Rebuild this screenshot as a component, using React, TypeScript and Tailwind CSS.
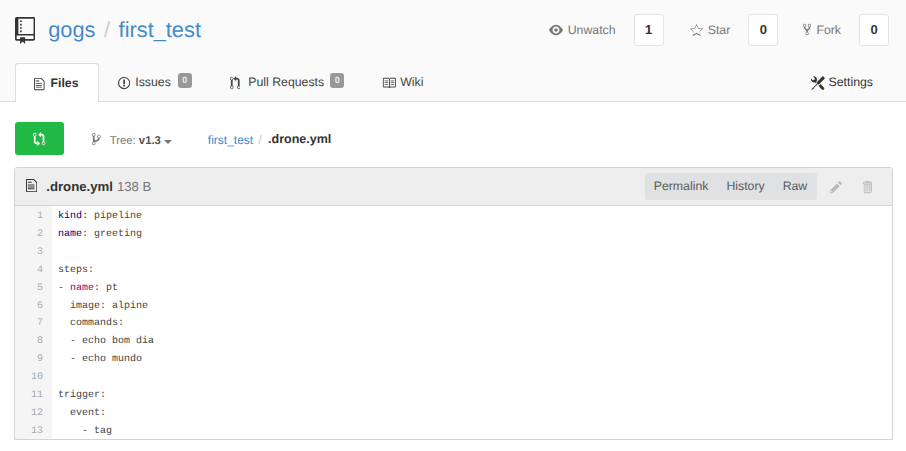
const ICONS: Record<string, { w: number; d: string }> = {
  repo: { w: 12, d: 'M4 9H3V8h1v1zm0-3H3v1h1V6zm0-2H3v1h1V4zm0-2H3v1h1V2zm8-1v12c0 .55-.45 1-1 1H6v2l-1.5-1.5L3 16v-2H1c-.55 0-1-.45-1-1V1c0-.55.45-1 1-1h10c.55 0 1 .45 1 1zm-1 10H1v2h2v-1h3v1h5v-2zm0-10H2v9h9V1z' },
  eye: { w: 16, d: 'M8.06 2C3 2 0 8 0 8s3 6 8.06 6C13 14 16 8 16 8s-3-6-7.94-6zM8 12c-2.2 0-4-1.78-4-4 0-2.2 1.8-4 4-4 2.22 0 4 1.8 4 4 0 2.22-1.78 4-4 4zm2-4c0 1.11-.89 2-2 2-1.11 0-2-.89-2-2 0-1.11.89-2 2-2 1.11 0 2 .89 2 2z' },
  star: { w: 14, d: 'M14 6l-4.9-.64L7 1 4.9 5.36 0 6l3.6 3.26L2.67 14 7 11.67 11.33 14l-.93-4.74L14 6zm-3.86 2.9l.7 3.55L7 10.4l-3.84 2.05.7-3.55L1.2 6.5l3.64-.48L7 2.8l2.16 3.22 3.64.48-2.66 2.4z' },
  fork: { w: 10, d: 'M8 1a1.993 1.993 0 0 0-1 3.72V6L5 8 3 6V4.72A1.993 1.993 0 0 0 2 1a1.993 1.993 0 0 0-1 3.72V6.5l3 3v1.78A1.993 1.993 0 0 0 5 15a1.993 1.993 0 0 0 1-3.72V9.5l3-3V4.72A1.993 1.993 0 0 0 8 1zM2 4.2C1.34 4.2.8 3.65.8 3c0-.65.55-1.2 1.2-1.2.65 0 1.2.55 1.2 1.2 0 .65-.55 1.2-1.2 1.2zm3 10c-.66 0-1.2-.55-1.2-1.2 0-.65.55-1.2 1.2-1.2.65 0 1.2.55 1.2 1.2 0 .65-.55 1.2-1.2 1.2zm3-10c-.66 0-1.2-.55-1.2-1.2 0-.65.55-1.2 1.2-1.2.65 0 1.2.55 1.2 1.2 0 .65-.55 1.2-1.2 1.2z' },
  file: { w: 12, d: 'M6 5H2V4h4v1zM2 8h7V7H2v1zm0 2h7V9H2v1zm0 2h7v-1H2v1zm10-7.5V14c0 .55-.45 1-1 1H1c-.55 0-1-.45-1-1V2c0-.55.45-1 1-1h7.5L12 4.5zM11 5L8 2H1v12h10V5z' },
  issue: { w: 14, d: 'M7 2.3c3.14 0 5.7 2.56 5.7 5.7s-2.56 5.7-5.7 5.7A5.71 5.71 0 0 1 1.3 8c0-3.14 2.56-5.7 5.7-5.7zM7 1C3.14 1 0 4.14 0 8s3.14 7 7 7 7-3.14 7-7-3.14-7-7-7zm1 3H6v5h2V4zm0 6H6v2h2v-2z' },
  pull: { w: 12, d: 'M11 11.28V5c-.03-.78-.34-1.47-.94-2.06C9.46 2.35 8.78 2.03 8 2H7V0L4 3l3 3V4h1c.27.02.48.11.69.31.21.2.3.42.31.69v6.28A1.993 1.993 0 0 0 10 15a1.993 1.993 0 0 0 1-3.72zm-1 2.92c-.66 0-1.2-.55-1.2-1.2 0-.65.55-1.2 1.2-1.2.65 0 1.2.55 1.2 1.2 0 .65-.55 1.2-1.2 1.2zM4 3c0-1.11-.89-2-2-2a1.993 1.993 0 0 0-1 3.72v6.56A1.993 1.993 0 0 0 2 15a1.993 1.993 0 0 0 1-3.72V4.72c.59-.34 1-.98 1-1.72zm-.8 10c0 .66-.55 1.2-1.2 1.2-.65 0-1.2-.55-1.2-1.2 0-.65.55-1.2 1.2-1.2.65 0 1.2.55 1.2 1.2zM2 4.2C1.34 4.2.8 3.65.8 3c0-.65.55-1.2 1.2-1.2.65 0 1.2.55 1.2 1.2 0 .65-.55 1.2-1.2 1.2z' },
  book: { w: 16, d: 'M3 5h4v1H3V5zm0 3h4V7H3v1zm0 2h4V9H3v1zm11-5h-4v1h4V5zm0 2h-4v1h4V7zm0 2h-4v1h4V9zm2-6v9c0 .55-.45 1-1 1H9.5l-1 1-1-1H2c-.55 0-1-.45-1-1V3c0-.55.45-1 1-1h5.5l1 1 1-1H15c.55 0 1 .45 1 1zm-8 .5L7.5 3H2v9h6V3.5zm7-.5H9.5l-.5.5V12h6V3z' },
  tools: { w: 16, d: 'M4.48 7.27c.26.26 1.28 1.33 1.28 1.33l.56-.58-.88-.91 1.69-1.8s-.76-.74-.43-.45c.32-1.19.03-2.51-.87-3.44C4.93.5 3.66.2 2.52.51l1.93 2-.51 1.96-1.89.52-1.93-2C-.19 4.17.1 5.48 1 6.4c.94.98 2.29 1.26 3.48.87zm6.44 1.94l-2.33 2.3 3.84 3.98c.31.33.73.49 1.14.49.41 0 .82-.16 1.14-.49.63-.65.63-1.7 0-2.35l-3.79-3.93zM16 2.53L13.55 0 6.33 7.46l.88.91-4.31 4.46-.99.53-1.39 2.27.35.37 2.2-1.44.51-1.02L7.9 9.08l.88.91L16 2.53z' },
  pencil: { w: 14, d: 'M0 12v3h3l8-8-3-3-8 8zm3 2H1v-2h1v1h1v1zm10.3-9.3L12 6 9 3l1.3-1.3a.996.996 0 0 1 1.41 0l1.59 1.59c.39.39.39 1.02 0 1.41z' },
  trash: { w: 12, d: 'M11 2H9c0-.55-.45-1-1-1H5c-.55 0-1 .45-1 1H2c-.55 0-1 .45-1 1v1c0 .55.45 1 1 1v9c0 .55.45 1 1 1h7c.55 0 1-.45 1-1V5c.55 0 1-.45 1-1V3c0-.55-.45-1-1-1zm-1 12H3V5h1v8h1V5h1v8h1V5h1v8h1V5h1v8h1V5h1v9zm1-10H2V3h9v1z' },
  branch: { w: 10, d: 'M10 5c0-1.11-.89-2-2-2a1.993 1.993 0 0 0-1 3.72v.3c-.02.52-.23.98-.63 1.38-.4.4-.86.61-1.38.63-.83.02-1.48.16-2 .45V4.72a1.993 1.993 0 0 0-1-3.72C.88 1 0 1.89 0 3a2 2 0 0 0 1 1.72v6.56c-.59.35-1 .99-1 1.72 0 1.11.89 2 2 2 1.11 0 2-.89 2-2 0-.53-.2-1-.53-1.36.09-.06.48-.41.59-.47.25-.11.56-.17.94-.17 1.05-.05 1.95-.45 2.75-1.25S8.95 7.77 9 6.73h-.02C9.59 6.37 10 5.73 10 5zM2 1.8c.66 0 1.2.55 1.2 1.2 0 .65-.55 1.2-1.2 1.2C1.35 4.2.8 3.65.8 3c0-.65.55-1.2 1.2-1.2zm0 12.41c-.66 0-1.2-.55-1.2-1.2 0-.65.55-1.2 1.2-1.2.65 0 1.2.55 1.2 1.2 0 .65-.55 1.2-1.2 1.2zm6-8c-.66 0-1.2-.55-1.2-1.2 0-.65.55-1.2 1.2-1.2.65 0 1.2.55 1.2 1.2 0 .65-.55 1.2-1.2 1.2z' },
  compare: { w: 14, d: 'M5 12H4c-.27-.02-.48-.11-.69-.31-.21-.2-.3-.42-.31-.69V4.72A1.993 1.993 0 0 0 2 1a1.993 1.993 0 0 0-1 3.72V11c.03.78.34 1.47.94 2.06.6.59 1.28.91 2.06.94h1v2l3-3-3-3v2zM2 1.8c.66 0 1.2.55 1.2 1.2 0 .65-.55 1.2-1.2 1.2C1.35 4.2.8 3.65.8 3c0-.65.55-1.2 1.2-1.2zm11 9.48V5c-.03-.78-.34-1.47-.94-2.06-.6-.59-1.28-.91-2.06-.94H9V0L6 3l3 3V4h1c.27.02.48.11.69.31.21.2.3.42.31.69v6.28A1.993 1.993 0 0 0 12 15a1.993 1.993 0 0 0 1-3.72zm-1 2.92c-.66 0-1.2-.55-1.2-1.2 0-.65.55-1.2 1.2-1.2.65 0 1.2.55 1.2 1.2 0 .65-.55 1.2-1.2 1.2z' },
}

function Octicon({ name, size = 16, className = '' }: { name: string; size?: number; className?: string }) {
  const icon = ICONS[name]
  return (
    <svg width={(icon.w * size) / 16} height={size} viewBox={`0 0 ${icon.w} 16`} fill="currentColor" className={`shrink-0 ${className}`}>
      <path fillRule="evenodd" d={icon.d} />
    </svg>
  )
}

function Count({ n }: { n: number }) {
  return (
    <span className="flex h-[32px] w-[30px] items-center justify-center rounded-[3px] border border-[#e4e4e4] bg-white text-[13px] font-bold text-[#333]">
      {n}
    </span>
  )
}

function Badge({ n }: { n: number }) {
  return (
    <span className="flex h-[15px] w-[14px] items-center justify-center rounded-[3px] bg-[#999] text-[9px] font-bold text-[#eee]">
      {n}
    </span>
  )
}

const KEY = 'text-[#000080]'
const NESTED = 'text-[#990073]'

const LINES: [string, string?, string?][] = [
  ['', 'kind', ': pipeline'],
  ['', 'name', ': greeting'],
  [''],
  ['steps:'],
  ['- ', 'name', ': pt'],
  ['  image: alpine'],
  ['  commands:'],
  ['  - echo bom dia'],
  ['  - echo mundo'],
  [''],
  ['trigger:'],
  ['  event:'],
  ['    - tag'],
]

export default function App() {
  return (
    <div className="min-h-[451px] bg-white font-['Liberation_Sans',Arial,sans-serif] text-[#333] opacity-[0.999] antialiased [text-rendering:geometricPrecision]">
      {/* Repo header + tabs */}
      <div className="h-[102px] border-b border-[#ddd] bg-[#fafafa] pl-[15px] pr-[17px]">
        <div className="flex h-[63px] items-start justify-between">
          <div className="flex items-center pt-[13px]">
            <Octicon name="repo" size={27} className="text-[#333]" />
            <h1 className="ml-[13px] flex h-[34px] items-center text-[21.8px] leading-[34px] text-[#428bca]">
              <span>gogs</span>
              <span className="mx-[8.5px] text-[#ccc]">/</span>
              <span>first_test</span>
            </h1>
          </div>
          <div className="flex items-center pt-[14px] text-[12.3px] text-[#777]">
            <span className="flex items-center gap-[5px]">
              <Octicon name="eye" size={14} className="text-[#777]" />
              Unwatch
            </span>
            <span className="ml-[18px]"><Count n={1} /></span>
            <span className="ml-[26px] flex items-center gap-[5px]">
              <Octicon name="star" size={15} className="text-[#777]" />
              Star
            </span>
            <span className="ml-[18px]"><Count n={0} /></span>
            <span className="ml-[25px] flex items-center gap-[5px]">
              <Octicon name="fork" size={13} className="-mt-[2px] text-[#777]" />
              Fork
            </span>
            <span className="ml-[18px]"><Count n={0} /></span>
          </div>
        </div>
        <div className="flex items-start text-[12.3px] text-[#444]">
          <div className="flex h-[39px] w-[84px] items-center gap-[6px] rounded-t-[3px] border border-b-0 border-[#ddd] bg-white pl-[18px] pt-px font-bold text-[#333]">
            <Octicon name="file" size={14} />
            Files
          </div>
          <div className="ml-[19px] flex h-[38px] items-center gap-[5px] pt-px">
            <Octicon name="issue" size={14} />
            Issues
            <span className="ml-[2px] -mt-[4px]"><Badge n={0} /></span>
          </div>
          <div className="ml-[38px] flex h-[38px] items-center gap-[8px] pt-px">
            <Octicon name="pull" size={14} />
            Pull Requests
            <span className="-mt-[4px] -ml-[2px]"><Badge n={0} /></span>
          </div>
          <div className="ml-[38px] flex h-[38px] items-center gap-[4px] pt-px">
            <Octicon name="book" size={14} />
            Wiki
          </div>
          <div className="ml-auto mr-[16px] flex h-[38px] items-center gap-[4px] pt-px text-[#333]">
            <Octicon name="tools" size={14} />
            Settings
          </div>
        </div>
      </div>

      {/* Toolbar */}
      <div className="flex h-[65px] items-start pl-[15px] pt-[20px]">
        <span className="flex h-[33px] w-[49px] items-center justify-center rounded-[3px] bg-[#21ba45] text-white">
          <Octicon name="compare" size={14} />
        </span>
        <span className="ml-[28px] flex h-[33px] items-center pt-[5px] text-[11.3px] text-[#777]">
          <Octicon name="branch" size={14} className="mr-[9px] -mt-[4px]" />
          Tree:&nbsp;<b className="font-bold text-[#555]">v1.3</b>
          <span className="ml-[3px] mt-[1px] h-0 w-0 border-x-[4px] border-t-[4px] border-x-transparent border-t-[#777]" />
        </span>
        <span className="ml-[36px] flex h-[33px] items-center pt-[2px] text-[12px]">
          <span className="text-[#428bca]">first_test</span>
          <span className="ml-[5px] mr-[6.5px] text-[#ccc]">/</span>
          <b className="text-[12.5px] font-bold text-[#333]">.drone.yml</b>
        </span>
      </div>

      {/* File box */}
      <div className="mx-[14px] w-[879px] overflow-hidden rounded-t-[3px] border border-[#d4d4d5]">
        <div className="flex h-[38px] items-center border-b border-[#d4d4d5] bg-[#eee] pl-[11px] pr-[20px]">
          <Octicon name="file" size={15} className="-mt-[2px] text-[#333]" />
          <b className="ml-[9px] text-[13.2px] font-bold text-[#333]">.drone.yml</b>
          <span className="ml-[4px] text-[13.2px] text-[#777]">138 B</span>
          <div className="ml-auto flex h-[27px] items-center rounded-[3px] bg-[#e0e1e2] text-[12.3px] text-[#5a5a5a]">
            <span className="px-[9px]">Permalink</span>
            <span className="px-[9px]">History</span>
            <span className="pl-[9px] pr-[10px]">Raw</span>
          </div>
          <Octicon name="pencil" size={14} className="ml-[13px] mt-px text-[#bbb]" />
          <Octicon name="trash" size={14} className="ml-[19px] mt-px text-[#bbb]" />
        </div>
        <div className="font-['Liberation_Mono',monospace] text-[10px] leading-[21px] text-[#444]">
          {LINES.map((line, i) => (
            <div key={i} className="flex h-[17.92px]">
              <span className="w-[37px] shrink-0 bg-[#f5f5f5] pr-[9px] text-right text-[#aaa]">{i + 1}</span>
              <span className="whitespace-pre pl-[6px]">
                {line[1] ? (
                  <>
                    {line[0]}
                    <span className={line[0] ? NESTED : KEY}>{line[1]}</span>
                    {line[0] ? <span className={NESTED}>:</span> : ':'}
                    {line[2]?.slice(1)}
                  </>
                ) : (
                  line[0]
                )}
              </span>
            </div>
          ))}
        </div>
      </div>
    </div>
  )
}
